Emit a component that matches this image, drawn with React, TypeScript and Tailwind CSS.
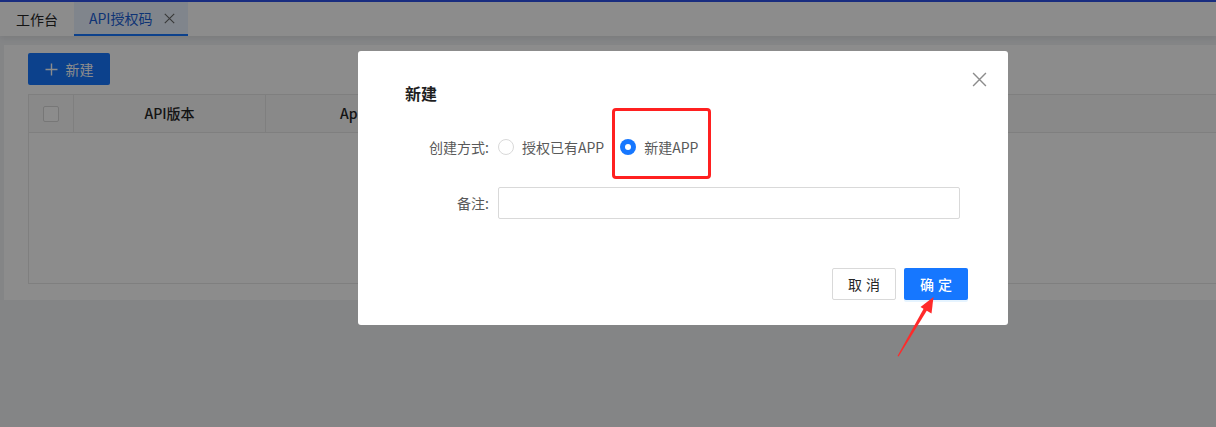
import React from "react";

const font = { fontFamily: '"Noto Sans CJK SC", "Noto Sans", sans-serif' };

function CloseIcon({ size = 14, color = "currentColor", sw = 1.3 }: { size?: number; color?: string; sw?: number }) {
  return (
    <svg width={size} height={size} viewBox="0 0 14 14" fill="none">
      <path d="M1 1L13 13M13 1L1 13" stroke={color} strokeWidth={sw} />
    </svg>
  );
}

export default function App() {
  return (
    <div className="relative w-[1216px] h-[427px] overflow-hidden bg-[#f0f2f5] text-[14px] text-[#262626]" style={font}>
      {/* page underneath */}
      <div className="flex flex-col h-full">
        <div className="h-[2px] bg-[#2f54eb]" />
        <div className="h-[34px] bg-white flex items-stretch shadow-[0_2px_6px_rgba(0,0,0,0.08)]">
          <div className="flex items-center px-4 text-[14px] text-[#262626]">工作台</div>
          <div className="flex items-center gap-3 pl-[15px] pr-[13px] bg-[#e9f3ff] border-b-2 border-[#1677ff] text-[#1a5fd6] text-[14px]">
            <span>API授权码</span>
            <span className="text-[#555]"><CloseIcon size={11} color="#666" sw={1.4} /></span>
          </div>
        </div>
        <div className="pl-1 pt-[9px]">
          <div className="bg-white h-[255px] pl-6 pt-2">
            <button className="h-8 w-[82px] rounded-[2px] bg-[#1677ff] text-white flex items-center justify-center gap-2 text-[14px]">
              <svg width="13" height="13" viewBox="0 0 13 13" fill="none">
                <path d="M6.5 0.5V12.5M0.5 6.5H12.5" stroke="white" strokeWidth="1.4" />
              </svg>
              <span>新建</span>
            </button>
            <div className="mt-[9px] border border-[#e8e8e8] h-[190px] w-[1300px]">
              <div className="flex h-[38px] bg-[#fafafa] border-b border-[#e8e8e8] font-medium text-[14px] text-[#262626]">
                <div className="w-[45px] border-r border-[#e8e8e8] flex items-center justify-center">
                  <div className="w-4 h-4 border border-[#d9d9d9] rounded-[2px] bg-white" />
                </div>
                <div className="w-[192px] border-r border-[#e8e8e8] flex items-center justify-center">API版本</div>
                <div className="w-[200px] border-r border-[#e8e8e8] flex items-center justify-center">AppKey</div>
                <div className="w-[200px] border-r border-[#e8e8e8] flex items-center justify-center">AppSecret</div>
                <div className="w-[165px] border-r border-[#e8e8e8] flex items-center justify-center">创建时间</div>
                <div className="flex-1 flex items-center pl-[9px] font-semibold">备注</div>
              </div>
            </div>
          </div>
        </div>
      </div>

      {/* mask */}
      <div className="absolute inset-0 bg-black/45" />

      {/* modal */}
      <div className="absolute left-[358px] top-[51px] w-[650px] h-[274px] bg-white rounded-[3px] flex flex-col pt-[30px] pb-[25px]">
        <button className="absolute right-[21px] top-[21px] text-[#8c8c8c]">
          <CloseIcon size={15} color="#8c8c8c" sw={1.3} />
        </button>
        <div className="pl-[47px] h-6 leading-6 text-[16px] font-semibold text-[#1f1f1f]">新建</div>

        <div className="mt-[26px] flex items-center h-8">
          <div className="w-[140px] pr-[9px] text-right text-[#595959]">创建方式:</div>
          <div className="flex items-center">
            <label className="flex items-center gap-2 h-[22px]">
              <span className="w-4 h-4 rounded-full border border-[#d9d9d9] bg-white" />
              <span className="text-[#595959]">授权已有APP</span>
            </label>
            <label className="relative ml-4 flex items-center gap-2 h-[22px]">
              <span className="w-4 h-4 rounded-full bg-[#1677ff] flex items-center justify-center">
                <span className="w-[6px] h-[6px] rounded-full bg-white" />
              </span>
              <span className="text-[#595959]">新建APP</span>
              <span className="absolute left-[-8px] right-[-12px] top-[-28px] bottom-[-21px] border-[3px] border-[#ff2020] rounded-[4px]" />
            </label>
          </div>
        </div>

        <div className="mt-6 flex items-center h-8">
          <div className="w-[140px] pr-[9px] text-right text-[#595959]">备注:</div>
          <div className="w-[462px] h-8 border border-[#d9d9d9] rounded-[2px]" />
        </div>

        <div className="mt-auto flex justify-end gap-2 pr-10">
          <button className="w-16 h-8 border border-[#d9d9d9] rounded-[2px] bg-white text-[#262626] tracking-[4px] pl-[4px]">取消</button>
          <button className="w-16 h-8 rounded-[2px] bg-[#1677ff] text-white font-medium tracking-[4px] pl-[4px] shadow-[0_2px_0_rgba(5,145,255,0.1)]">确定</button>
        </div>
      </div>

      {/* red annotation arrow */}
      <svg className="absolute left-0 top-0 pointer-events-none" width="1216" height="427">
        <path d="M897.5 356 L898.6 356.4 L927.5 309.5 L924.3 307.6 Z" fill="#ff2a2a" />
        <path d="M933.5 297 L920.5 307 L931.5 313.5 Z" fill="#ff2a2a" />
      </svg>
    </div>
  );
}
